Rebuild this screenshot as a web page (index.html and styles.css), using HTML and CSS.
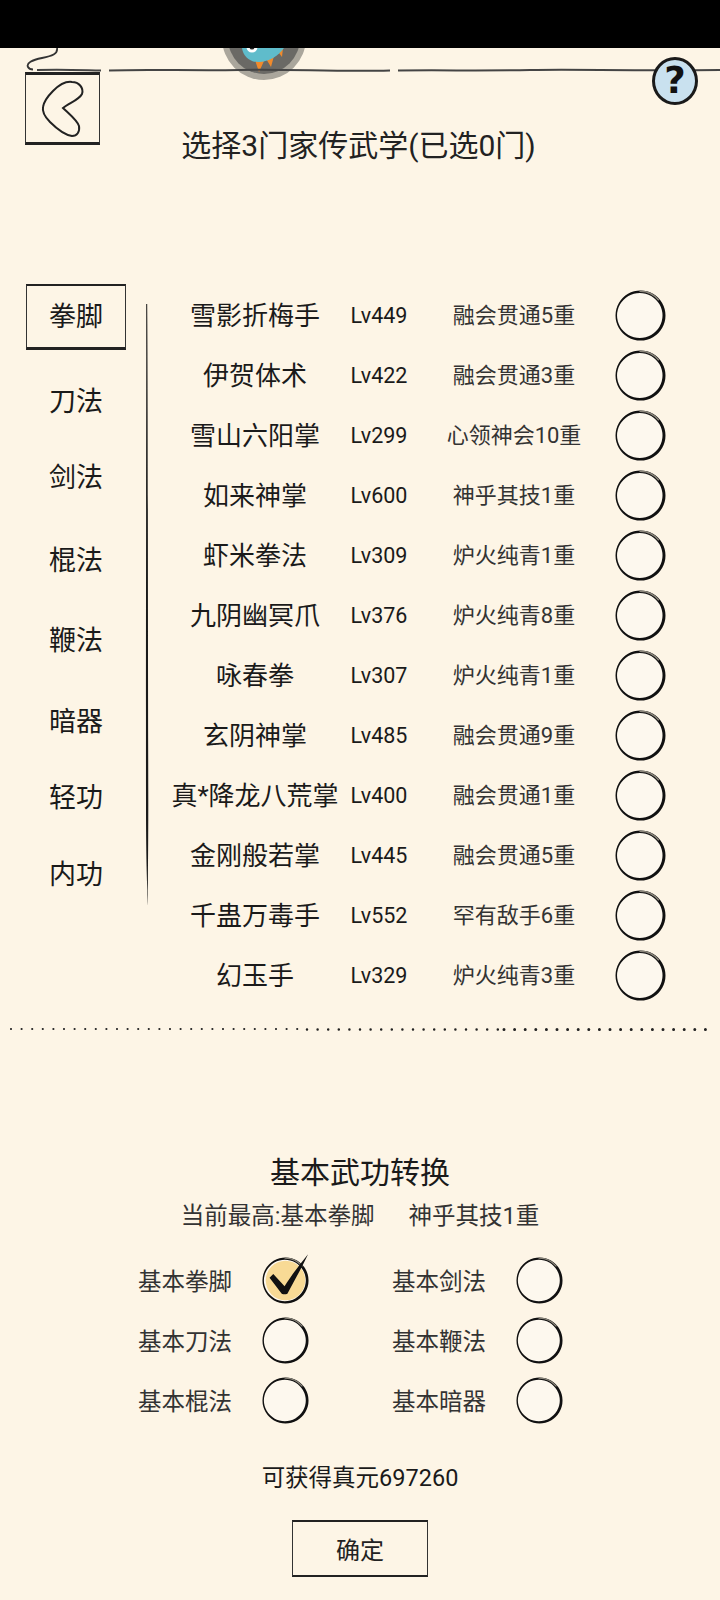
FILE: index.html
```html
<!DOCTYPE html>
<html>

<head>
    <title>家传武学</title>
    <link rel="stylesheet" href="styles.css">
</head>

<body>
    <!-- Shared ink circles -->
    <svg class="defs" width="0" height="0">
        <symbol id="ring" viewBox="0 0 50 50" overflow="visible">
            <circle cx="25" cy="25" r="23" fill="#fdf8ee"></circle>
            <path fill="#111" fill-rule="evenodd" d="M25 .5a24.500 24.500 0 1 0 .01 0ZM24.300 3a22.300 22 0 1 1-.01 0Z"></path>
            <path fill="none" stroke="#8a857a" stroke-width="1.400" d="M24 1.200C31 1 38 4 43 10"></path>
        </symbol>
    </svg>

    <div class="black-bar"></div>

    <!-- Header -->
    <header class="header">
        <svg class="header-ink" viewBox="0 48 720 60" width="720" height="60">
            <circle cx="264" cy="38" r="42" fill="#aaa69c"></circle>
            <circle cx="264" cy="38" r="36" fill="#6a6965"></circle>
            <path fill="#f08a2c" d="M255 60l9 1-5 11ZM265 57l9-1-3 11ZM276 49l7-1-1 9Z"></path>
            <path fill="#5fbccb" d="M242 48C243 56 250 63 260 62C270 61 278 56 284 48Z"></path>
            <circle cx="252" cy="47" r="5.500" fill="#fff"></circle>
            <circle cx="252" cy="47" r="2.500" fill="#222"></circle>
            <path fill="none" stroke="#333" stroke-width="1.800" d="M57 48C58 54 52 56 42 58C32 60 26 63 28 67C29 69 31 69.500 33 69.500"></path>
            <path fill="none" stroke="#444" stroke-width="2" d="M37 70C60 69 80 70 101 70.500M109 70.500C150 69 190 71 240 70C290 69 340 72 390 70.500M398 70.500C450 70 480 71 530 70C580 69 620 71 720 70"></path>
        </svg>
        <a class="back-btn">
            <svg viewBox="0 0 75 73" width="75" height="73">
                <path fill="none" stroke="#222" stroke-width="2" d="M28 19C33 14 40 9 47 10C54 10 59 16 57 22C54 28 44 31 38 36C43 41 52 48 54 54C55 60 52 64 47 64C40 63 31 56 25 50C20 45 17 40 18 35C19 29 23 24 28 19Z"></path>
            </svg>
        </a>
        <h1 class="title">选择3门家传武学(已选0门)</h1>
        <div class="help">?</div>
    </header>

    <!-- Skill picker -->
    <main class="picker">
        <ul class="tabs">
            <li class="tab-active">拳脚</li>
            <li>刀法</li>
            <li>剑法</li>
            <li>棍法</li>
            <li>鞭法</li>
            <li>暗器</li>
            <li>轻功</li>
            <li>内功</li>
        </ul>
        <svg class="divider" viewBox="0 0 4 602" width="4" height="602">
            <path fill="#1a1a1a" d="M1.200 0L2.200 0C3 100 2.800 300 3.300 500C3.300 550 2.800 580 3 602C2 580 1 550 1 500C.8 300 1.400 100 1.200 0Z"></path>
        </svg>
        <div class="skills">
            <div class="skill"><span class="skill-name">雪影折梅手</span><span class="skill-level">Lv449</span><span class="skill-rank">融会贯通5重</span><svg class="ring"><use href="#ring"></use></svg></div>
            <div class="skill"><span class="skill-name">伊贺体术</span><span class="skill-level">Lv422</span><span class="skill-rank">融会贯通3重</span><svg class="ring"><use href="#ring"></use></svg></div>
            <div class="skill"><span class="skill-name">雪山六阳掌</span><span class="skill-level">Lv299</span><span class="skill-rank">心领神会10重</span><svg class="ring"><use href="#ring"></use></svg></div>
            <div class="skill"><span class="skill-name">如来神掌</span><span class="skill-level">Lv600</span><span class="skill-rank">神乎其技1重</span><svg class="ring"><use href="#ring"></use></svg></div>
            <div class="skill"><span class="skill-name">虾米拳法</span><span class="skill-level">Lv309</span><span class="skill-rank">炉火纯青1重</span><svg class="ring"><use href="#ring"></use></svg></div>
            <div class="skill"><span class="skill-name">九阴幽冥爪</span><span class="skill-level">Lv376</span><span class="skill-rank">炉火纯青8重</span><svg class="ring"><use href="#ring"></use></svg></div>
            <div class="skill"><span class="skill-name">咏春拳</span><span class="skill-level">Lv307</span><span class="skill-rank">炉火纯青1重</span><svg class="ring"><use href="#ring"></use></svg></div>
            <div class="skill"><span class="skill-name">玄阴神掌</span><span class="skill-level">Lv485</span><span class="skill-rank">融会贯通9重</span><svg class="ring"><use href="#ring"></use></svg></div>
            <div class="skill"><span class="skill-name">真*降龙八荒掌</span><span class="skill-level">Lv400</span><span class="skill-rank">融会贯通1重</span><svg class="ring"><use href="#ring"></use></svg></div>
            <div class="skill"><span class="skill-name">金刚般若掌</span><span class="skill-level">Lv445</span><span class="skill-rank">融会贯通5重</span><svg class="ring"><use href="#ring"></use></svg></div>
            <div class="skill"><span class="skill-name">千蛊万毒手</span><span class="skill-level">Lv552</span><span class="skill-rank">罕有敌手6重</span><svg class="ring"><use href="#ring"></use></svg></div>
            <div class="skill"><span class="skill-name">幻玉手</span><span class="skill-level">Lv329</span><span class="skill-rank">炉火纯青3重</span><svg class="ring"><use href="#ring"></use></svg></div>
        </div>
    </main>

    <!-- Dotted separator -->
    <svg class="dots" viewBox="0 0 720 6" width="720" height="6">
        <line x1="11" y1="3" x2="300" y2="3" stroke-width="2.200"></line>
        <line x1="307" y1="3.500" x2="500" y2="3.500" stroke-width="2.500"></line>
        <line x1="504" y1="3.500" x2="710" y2="3.500" stroke-width="3"></line>
    </svg>

    <!-- Basic skill conversion -->
    <section class="convert">
        <h2 class="convert-title">基本武功转换</h2>
        <p class="convert-current"><span>当前最高:基本拳脚</span><span>神乎其技1重</span></p>
        <div class="convert-grid">
            <div class="pick">基本拳脚
                <svg class="ring ring-small" viewBox="0 0 50 50">
                    <use href="#ring"></use>
                    <circle cx="25" cy="25" r="21" fill="#f8da95"></circle>
                    <path fill="#111" d="M8 22L12 18L24 31C31 20 40 8 49 -3C42 12 34 26 27 39C25 40 23 40 21 39Z"></path>
                </svg>
            </div>
            <div class="pick">基本剑法<svg class="ring ring-small"><use href="#ring"></use></svg></div>
            <div class="pick">基本刀法<svg class="ring ring-small"><use href="#ring"></use></svg></div>
            <div class="pick">基本鞭法<svg class="ring ring-small"><use href="#ring"></use></svg></div>
            <div class="pick">基本棍法<svg class="ring ring-small"><use href="#ring"></use></svg></div>
            <div class="pick">基本暗器<svg class="ring ring-small"><use href="#ring"></use></svg></div>
        </div>
        <p class="convert-total">可获得真元697260</p>
        <button class="confirm-btn">确定</button>
    </section>
</body>

</html>
```

FILE: styles.css
```css
body {
    font-family: Roboto, "Noto Sans CJK SC", sans-serif;
    background-color: #FDF5E6;
    color: #1a1a1a;
    margin: 0;
    padding: 0;
    width: 720px;
    height: 1600px;
    overflow: hidden;
}

.defs {
    position: absolute;
}

.black-bar {
    height: 48px;
    background-color: #000;
}

/* Header */
.header {
    position: relative;
    display: grid;
    grid-template-columns: 100px 1fr 100px;
    height: 237px;
}

.header-ink {
    position: absolute;
    top: 0;
    left: 0;
}

.back-btn {
    position: relative;
    display: block;
    box-sizing: border-box;
    width: 75px;
    height: 73px;
    margin: 24px 0 0 25px;
    border: 1.5px solid #333;
    border-top: 3px solid #222;
    border-bottom: 3px solid #222;
}

.back-btn svg {
    display: block;
    margin: -3px 0 0 -1.5px;
}

.title {
    margin: 78px 0 0;
    padding-right: 3px;
    font-size: 30px;
    font-weight: normal;
    line-height: 40px;
    text-align: center;
    color: #222;
}

.help {
    position: relative;
    box-sizing: border-box;
    justify-self: end;
    width: 46px;
    height: 48px;
    margin: 9px 22px 0 0;
    border: 3px solid #1a1a1a;
    border-radius: 50%;
    background-color: #C9E1EF;
    font-family: "DejaVu Sans", sans-serif;
    font-size: 37px;
    font-weight: bold;
    line-height: 42px;
    text-align: center;
    color: #111;
}

/* Picker */
.picker {
    display: flex;
    align-items: flex-start;
}

.tabs {
    list-style-type: none;
    width: 100px;
    margin: -1px 0 0 26px;
    padding: 0;
    font-size: 27px;
    line-height: 40px;
    text-align: center;
}

.tabs li {
    margin-top: 36px;
}

.tabs li.tab-active {
    box-sizing: border-box;
    height: 66px;
    margin-top: 0;
    border: 1.5px solid #333;
    border-top: 2.5px solid #222;
    border-bottom: 3px solid #222;
    line-height: 62px;
}

/* the tabs are not evenly spaced in the game */
.tabs li:nth-child(2) { margin-top: 32px; }
.tabs li:nth-child(4) { margin-top: 43px; }
.tabs li:nth-child(5) { margin-top: 40px; }
.tabs li:nth-child(6) { margin-top: 41px; }
.tabs li:nth-child(8) { margin-top: 37px; }

.divider {
    flex-shrink: 0;
    margin: 19px 0 0 19px;
}

.skills {
    margin-left: 16px;
}

.skill {
    display: grid;
    grid-template-columns: 180px 68px 202px 50px;
    align-items: center;
    height: 60px;
    text-align: center;
}

.skill-name {
    padding-bottom: 4px;
    font-size: 26px;
    white-space: nowrap;
}

.skill-level {
    font-size: 21.500px;
}

.skill-rank {
    padding-bottom: 5px;
    font-size: 22px;
    color: #333;
}

.ring {
    display: block;
    width: 51px;
    height: 51px;
    overflow: visible;
}

.ring-small {
    width: 47px;
    height: 47px;
}

/* Dots */
.dots {
    display: block;
    margin-top: 21px;
}

.dots line {
    stroke: #222;
    stroke-linecap: round;
    stroke-dasharray: 0 10.600;
}

/* Conversion */
.convert {
    margin-top: 121px;
    text-align: center;
    font-size: 23.500px;
}

.convert-title {
    margin: 0;
    font-size: 30px;
    font-weight: normal;
    line-height: 40px;
}

.convert-current {
    display: flex;
    justify-content: center;
    gap: 34px;
    margin: 7px 0 0;
    line-height: 32px;
    color: #333;
}

.convert-grid {
    display: grid;
    grid-template-columns: 170px 170px;
    column-gap: 84px;
    margin: 18px 0 0 138px;
}

.pick {
    display: flex;
    align-items: center;
    gap: 30px;
    height: 60px;
    color: #333;
    white-space: nowrap;
}

.convert-total {
    margin: 31px 0 0;
    line-height: 34px;
}

.confirm-btn {
    display: block;
    box-sizing: border-box;
    width: 136px;
    height: 57px;
    margin: 25px auto 0;
    padding: 0;
    border: 1.5px solid #333;
    border-top: 2px solid #222;
    border-bottom: 2.5px solid #222;
    background: none;
    font-family: inherit;
    font-size: 24px;
    color: #222;
}
```
